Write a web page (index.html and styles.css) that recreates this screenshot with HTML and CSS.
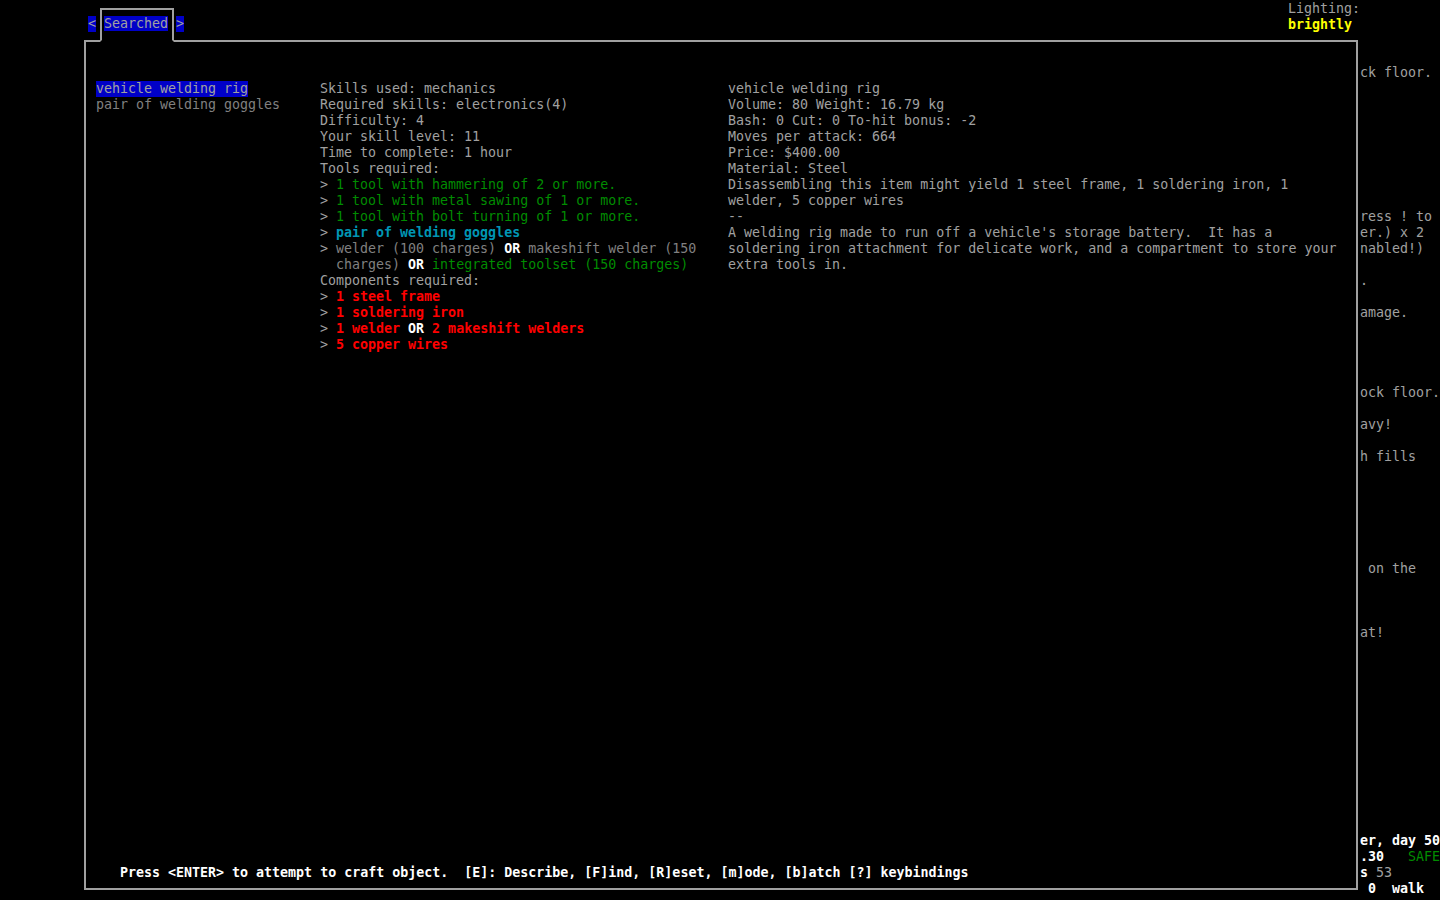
FILE: index.html
```html
<!DOCTYPE html>
<html>
	<head>
		<meta charset="utf-8">
		<title>Craft</title>
		<link rel="stylesheet" href="styles.css">
	</head>
	<body>
		<div class="screen">
			<header class="top">
				<span class="arrow">&lt;</span>
				<div class="tab"><span class="sel">Searched</span></div>
				<span class="arrow next">&gt;</span>
				<div class="lighting">Lighting:
<b class="yellow">brightly</b></div>
			</header>
			<div class="main">
				<section class="window">
					<div class="panes">
						<ul class="recipes">
							<li class="sel">vehicle welding rig</li>
							<li class="dim">pair of welding goggles</li>
						</ul>
						<div class="reqs">
							<div class="line">Skills used: mechanics</div>
							<div class="line">Required skills: electronics(4)</div>
							<div class="line">Difficulty: 4</div>
							<div class="line">Your skill level: 11</div>
							<div class="line">Time to complete: 1 hour</div>
							<div class="line">Tools required:</div>
							<div class="line">&gt; <span class="green">1 tool with hammering of 2 or more.</span></div>
							<div class="line">&gt; <span class="green">1 tool with metal sawing of 1 or more.</span></div>
							<div class="line">&gt; <span class="green">1 tool with bolt turning of 1 or more.</span></div>
							<div class="line">&gt; <span class="cyan">pair of welding goggles</span></div>
							<div class="line">&gt; <span class="dim">welder (100 charges)</span> <b class="white">OR</b> <span class="dim">makeshift welder (150</span></div>
							<div class="line">  <span class="dim">charges)</span> <b class="white">OR</b> <span class="green">integrated toolset (150 charges)</span></div>
							<div class="line">Components required:</div>
							<div class="line">&gt; <span class="red">1 steel frame</span></div>
							<div class="line">&gt; <span class="red">1 soldering iron</span></div>
							<div class="line">&gt; <span class="red">1 welder</span> <b class="white">OR</b> <span class="red">2 makeshift welders</span></div>
							<div class="line">&gt; <span class="red">5 copper wires</span></div>
						</div>
						<div class="info">
							<div class="line">vehicle welding rig</div>
							<div class="line">Volume: 80 Weight: 16.79 kg</div>
							<div class="line">Bash: 0 Cut: 0 To-hit bonus: -2</div>
							<div class="line">Moves per attack: 664</div>
							<div class="line">Price: $400.00</div>
							<div class="line">Material: Steel</div>
							<div class="line">Disassembling this item might yield 1 steel frame, 1 soldering iron, 1</div>
							<div class="line">welder, 5 copper wires</div>
							<div class="line">--</div>
							<div class="line">A welding rig made to run off a vehicle's storage battery.  It has a</div>
							<div class="line">soldering iron attachment for delicate work, and a compartment to store your</div>
							<div class="line">extra tools in.</div>
						</div>
					</div>
					<p class="hint">Press &lt;ENTER&gt; to attempt to craft object.  [E]: Describe, [F]ind, [R]eset, [m]ode, [b]atch [?] keybindings</p>
				</section>
				<pre class="sidebar">


ck floor.








ress ! to
er.) x 2
nabled!)

.

amage.




ock floor.

avy!

h fills






 on the



at!












<b class="white">er, day 50</b>
<b class="white">.30</b>   <span class="green">SAFE</span>
<b class="white">s</b> 53
<b class="white"> 0  walk</b></pre>
			</div>
		</div>
	</body>
</html>
```

FILE: styles.css
```css
html, body {
	margin: 0;
	padding: 0;
	background-color: #000;
}
body {
	color: #a0a0a0;
	font-family: "DejaVu Sans Mono", monospace;
	font-size: 13.3px;
	line-height: 16px;
}
.screen {
	width: 1440px;
	height: 900px;
	overflow: hidden;
}
.top {
	display: flex;
	align-items: flex-start;
	height: 32px;
	padding-left: 88px;
}
.arrow {
	margin-top: 16px;
	width: 8px;
	background-color: #0000c8;
}
.arrow.next {
	margin-left: 2px;
}
.tab {
	position: relative;
	z-index: 1;
	box-sizing: border-box;
	width: 74px;
	margin: 8px 0 0 4px;
	padding: 6px 0 8px 2px;
	border: 2px solid #a0a0a0;
	border-bottom-color: #000;
	background-color: #000;
}
.sel {
	background-color: #0000c8;
}
.lighting {
	margin-left: auto;
	width: 152px;
	padding-top: 1px;
	white-space: pre;
}
.main {
	display: flex;
	align-items: flex-start;
}
.window {
	box-sizing: border-box;
	display: flex;
	flex-direction: column;
	width: 1274px;
	height: 850px;
	margin: 8px 0 0 84px;
	padding: 39px 0 7px 10px;
	border: 2px solid #a0a0a0;
}
.panes {
	flex: 1;
	display: flex;
}
.recipes {
	width: 224px;
	margin: 0;
	padding: 0;
	list-style: none;
}
.recipes li {
	white-space: pre;
}
.recipes .sel {
	width: 152px;
}
.reqs {
	width: 408px;
}
.info {
	flex: 1;
}
.line {
	white-space: pre;
}
.hint {
	margin: 0 0 0 24px;
	color: #fff;
	font-weight: bold;
	white-space: pre;
}
.sidebar {
	width: 80px;
	margin: 1px 0 0 2px;
	overflow: hidden;
	font: inherit;
}
.dim {
	color: #808080;
}
.white {
	color: #fff;
}
.green {
	color: #008c00;
}
.cyan {
	color: #0096b4;
	font-weight: bold;
}
.red {
	color: #ff0000;
	font-weight: bold;
}
.yellow {
	color: #ffff00;
}
```
